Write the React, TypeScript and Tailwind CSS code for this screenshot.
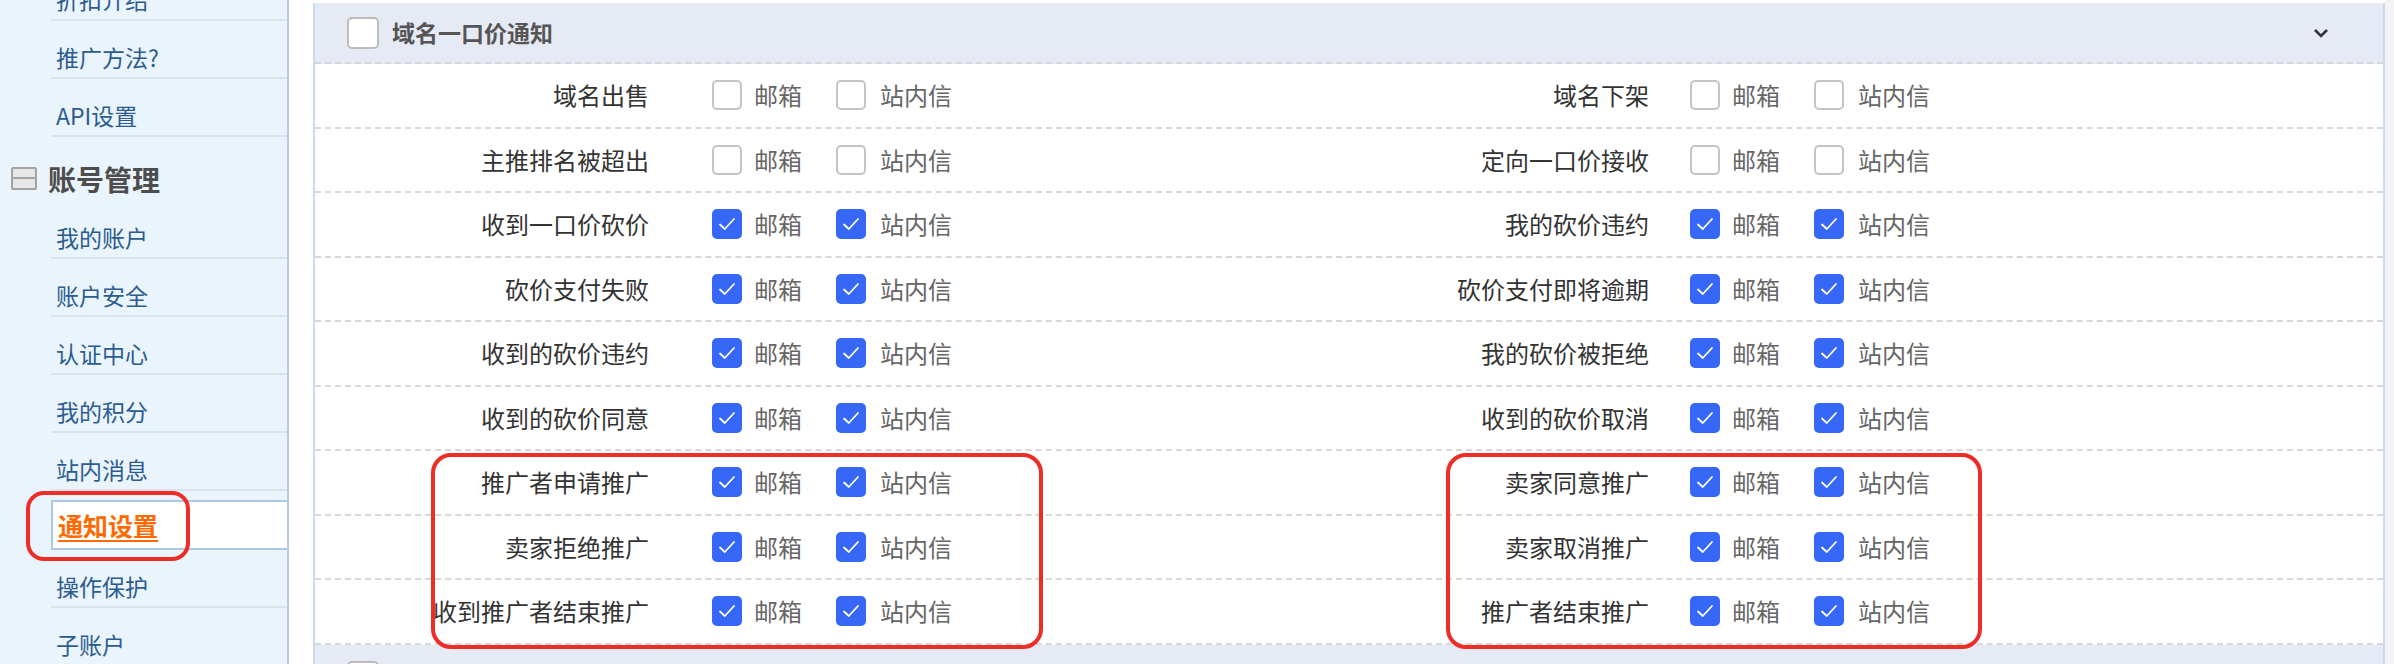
import React from 'react';

type Item = { label: string; checked: boolean };

const leftItems: Item[] = [
  { label: '域名出售', checked: false },
  { label: '主推排名被超出', checked: false },
  { label: '收到一口价砍价', checked: true },
  { label: '砍价支付失败', checked: true },
  { label: '收到的砍价违约', checked: true },
  { label: '收到的砍价同意', checked: true },
  { label: '推广者申请推广', checked: true },
  { label: '卖家拒绝推广', checked: true },
  { label: '收到推广者结束推广', checked: true },
];

const rightItems: Item[] = [
  { label: '域名下架', checked: false },
  { label: '定向一口价接收', checked: false },
  { label: '我的砍价违约', checked: true },
  { label: '砍价支付即将逾期', checked: true },
  { label: '我的砍价被拒绝', checked: true },
  { label: '收到的砍价取消', checked: true },
  { label: '卖家同意推广', checked: true },
  { label: '卖家取消推广', checked: true },
  { label: '推广者结束推广', checked: true },
];

const topLinks = ['折扣介绍', '推广方法?', 'API设置'];
const accountLinks = ['我的账户', '账户安全', '认证中心', '我的积分', '站内消息'];

const CheckBox = ({ checked }: { checked: boolean }) =>
  checked ? (
    <span className="flex h-[30px] w-[30px] shrink-0 items-center justify-center rounded-[5px] bg-[#3667f6]">
      <svg width="18" height="14" viewBox="0 0 18 14" fill="none">
        <path d="M2 7.5 L6.8 12 L16 2" stroke="#fff" strokeWidth="1.8" strokeLinecap="round" strokeLinejoin="round" />
      </svg>
    </span>
  ) : (
    <span className="block h-[30px] w-[30px] shrink-0 rounded-[5px] border-2 border-[#c4c4c4] bg-white" />
  );

const Options = ({ checked }: { checked: boolean }) => (
  <div className="flex items-center">
    <CheckBox checked={checked} />
    <span className="ml-[12px] text-[24px] text-[#666]">邮箱</span>
    <span className="ml-[34px] flex">
      <CheckBox checked={checked} />
    </span>
    <span className="ml-[14px] text-[24px] text-[#666]">站内信</span>
  </div>
);

const SideLink = ({ label }: { label: string }) => (
  <div className="ml-[51px] h-[58px] border-b-2 border-[#dde3ea] pl-[5px] pt-[24px] text-[23px] leading-[24px] text-[#2c5c8f]">
    {label}
  </div>
);

export default function App() {
  return (
    <div className="flex h-[664px] w-[2394px] overflow-hidden bg-white font-['Noto_Sans_CJK_SC',sans-serif]">
      {/* sidebar */}
      <aside className="relative w-[289px] shrink-0 border-r-2 border-[#b3cbe6] bg-[#eaf4fd]">
        <div className="-mt-[37px]">
          {topLinks.map((l) => (
            <SideLink key={l} label={l} />
          ))}
          <div className="flex h-[64px] items-end pb-[5px] pl-[11px]">
            <span className="mb-[6px] flex h-[23px] w-[26px] flex-col rounded-[2px] border-2 border-[#a3a3a3] bg-[#e6e6e6]">
              <span className="mt-[8px] h-[2px] w-full bg-[#a3a3a3]" />
            </span>
            <span className="ml-[11px] text-[28px] font-bold leading-[34px] text-[#4d4d4d]">账号管理</span>
          </div>
          {accountLinks.map((l) => (
            <SideLink key={l} label={l} />
          ))}
          <div className="ml-[51px] mt-[9px] h-[50px] border-y-2 border-l-2 border-[#afc7e3] bg-white pl-[5px] pt-[10px]">
            <span className="text-[25px] font-bold leading-[26px] text-[#ff6a00] underline decoration-2 underline-offset-[4px]">
              通知设置
            </span>
          </div>
          <SideLink label="操作保护" />
          <SideLink label="子账户" />
        </div>
        <div className="absolute left-[26px] top-[491px] h-[70px] w-[164px] rounded-[18px] border-[4px] border-[#ef2d27]" />
      </aside>

      {/* main */}
      <main className="flex flex-1 pl-[24px]">
        <section className="mt-[3px] flex-1 border-x-2 border-[#c6dbf4]">
          <div className="flex h-[61px] items-center border-b-2 border-dashed border-[#d8d8d8] bg-[#e6eaf5] pl-[32px] pr-[54px]">
            <span className="h-[32px] w-[32px] rounded-[5px] border-2 border-[#bcbcbc] bg-white" />
            <span className="ml-[13px] text-[23px] font-bold text-[#555]">域名一口价通知</span>
            <svg className="ml-auto" width="16" height="10" viewBox="0 0 16 10" fill="none">
              <path d="M2 2 L8 8 L14 2" stroke="#333" strokeWidth="2.6" />
            </svg>
          </div>
          <div className="relative">
            {leftItems.map((li, i) => {
              const ri = rightItems[i];
              return (
                <div key={li.label} className="flex h-[64.5px] items-center border-b-2 border-dashed border-[#d8d8d8] text-[24px]">
                  <div className="flex w-[1034px] items-center">
                    <span className="w-[334px] text-right text-[#333]">{li.label}</span>
                    <span className="ml-[63px]">
                      <Options checked={li.checked} />
                    </span>
                  </div>
                  <div className="flex items-center">
                    <span className="w-[300px] text-right text-[#333]">{ri.label}</span>
                    <span className="ml-[41px]">
                      <Options checked={ri.checked} />
                    </span>
                  </div>
                </div>
              );
            })}
            <div className="absolute left-[116px] top-[389px] h-[196px] w-[612px] rounded-[20px] border-[4px] border-[#ef2d27]" />
            <div className="absolute left-[1131px] top-[389px] h-[196px] w-[536px] rounded-[20px] border-[4px] border-[#ef2d27]" />
          </div>
          <div className="h-[40px] bg-[#e6eaf5] pl-[32px] pt-[16px]">
            <span className="block h-[32px] w-[32px] rounded-[5px] border-2 border-[#bcbcbc] bg-white" />
          </div>
        </section>
        <div className="w-[9px] bg-[#f3f3f3]" />
      </main>
    </div>
  );
}
